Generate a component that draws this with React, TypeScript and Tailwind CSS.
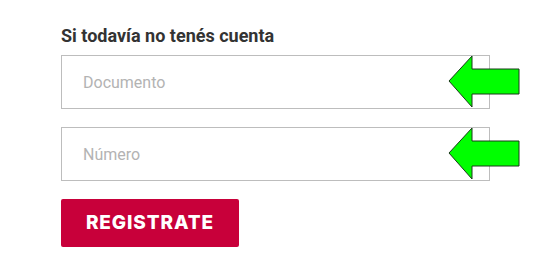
import React from "react";

function GreenArrow() {
  return (
    <svg width="72" height="54" viewBox="0 0 72 54" className="pointer-events-none">
      <path
        d="M1 26 L24 1 L24 14 L71 14 L71 39 L24 39 L24 52 Z"
        fill="#00ff00"
        stroke="#1a3a1a"
        strokeWidth="1"
        strokeLinejoin="miter"
      />
    </svg>
  );
}

function Field({ placeholder }: { placeholder: string }) {
  return (
    <div className="relative w-[429px]">
      <input
        type="text"
        placeholder={placeholder}
        className="block h-[54px] w-full border border-[#bdbdbd] bg-white px-[21px] text-[16px] text-[#333] placeholder:text-[#b3b3b3] outline-none"
        style={{ fontFamily: "Roboto, sans-serif" }}
      />
      <div className="absolute left-[387px] top-[0px]">
        <GreenArrow />
      </div>
    </div>
  );
}

export default function App() {
  return (
    <div className="h-[265px] w-[543px] bg-white pl-[61px] pt-[23px]">
      <div
        className="text-[18px] font-bold leading-[25px] text-[#333]"
        style={{ fontFamily: "Roboto, sans-serif" }}
      >
        Si todavía no tenés cuenta
      </div>
      <div className="mt-[7px] flex flex-col gap-[18px]">
        <Field placeholder="Documento" />
        <Field placeholder="Número" />
      </div>
      <button
        type="button"
        className="mt-[18px] h-[48px] w-[178px] rounded-[2px] bg-[#c8003a] text-[19px] font-extrabold tracking-[0.9px] text-white"
        style={{ fontFamily: "Inter, sans-serif" }}
      >
        REGISTRATE
      </button>
    </div>
  );
}
